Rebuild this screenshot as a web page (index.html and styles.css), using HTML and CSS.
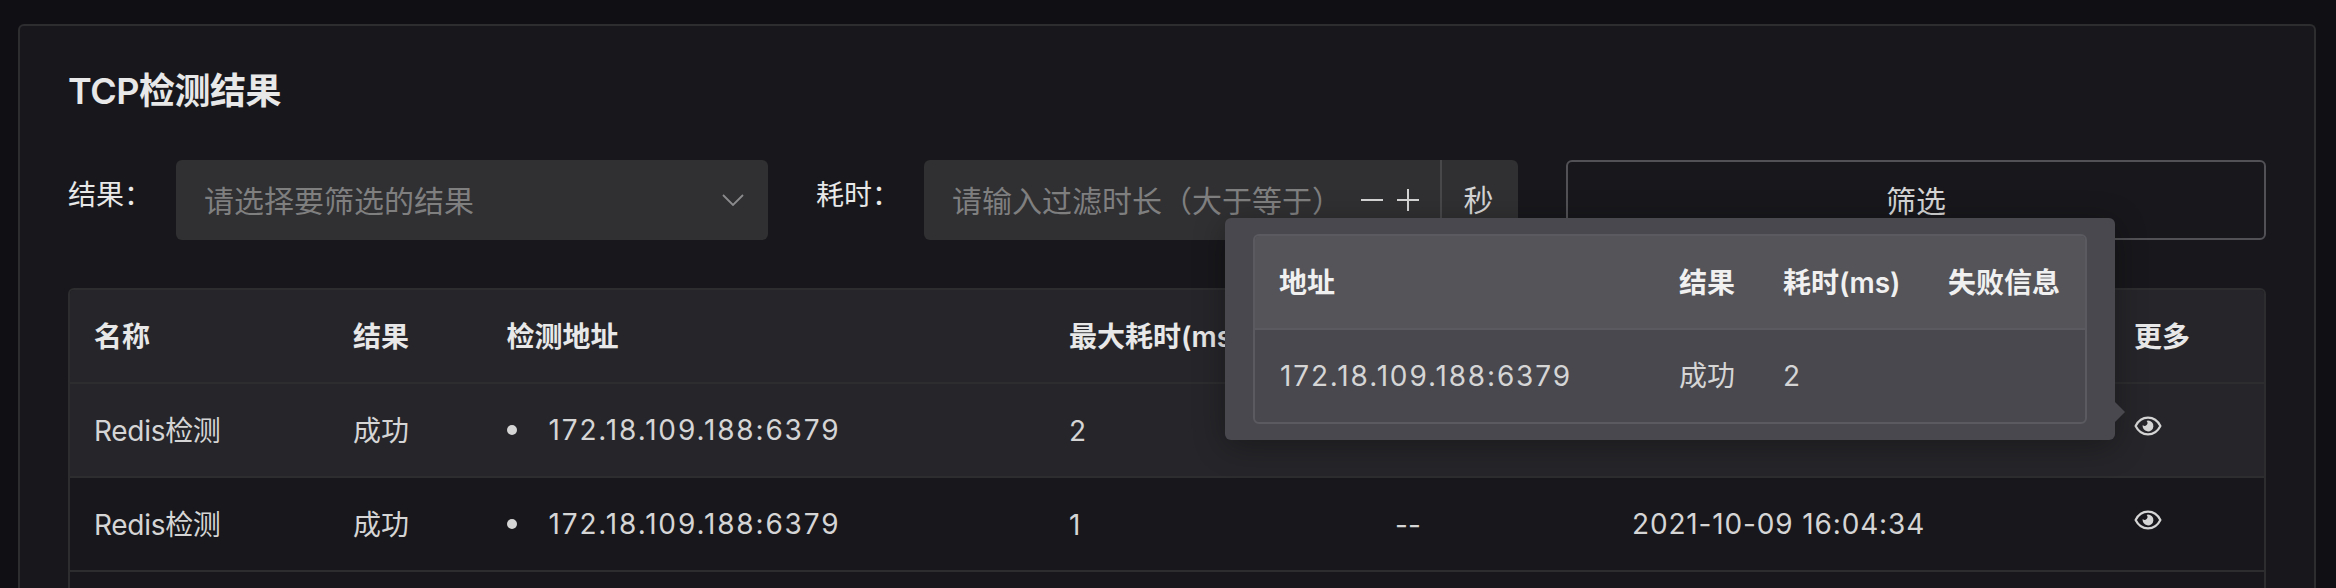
FILE: index.html
```html
<!DOCTYPE html>
<html lang="zh-CN">
<head>
<meta charset="utf-8">
<title>TCP检测结果</title>
<link rel="stylesheet" href="styles.css">
</head>
<body>
<svg class="sprite" aria-hidden="true">
  <symbol id="eye" viewBox="0 0 28 20">
    <path d="M1.6 10C4.4 4.4 9 1.6 14 1.6S23.600 4.400 26.400 10C23.600 15.600 19 18.400 14 18.400S4.400 15.600 1.600 10Z" fill="none" stroke="currentColor" stroke-width="2.200" stroke-linejoin="round"/>
    <path d="M14 4.600A5.400 5.400 0 1 1 8.700 8.900A2.600 2.600 0 0 0 12.600 5A5.400 5.400 0 0 1 14 4.600Z" fill="currentColor"/>
  </symbol>
</svg>
<main class="card">
  <h1 class="title">TCP检测结果</h1>
  <form class="filters">
    <div class="field">
      <label class="label">结果：</label>
      <div class="control select">
        <span class="placeholder">请选择要筛选的结果</span>
        <svg class="chevron" viewBox="0 0 22 12"><path d="M1 1L11 11L21 1" fill="none" stroke="currentColor" stroke-width="1.800"/></svg>
      </div>
    </div>
    <div class="field">
      <label class="label">耗时：</label>
      <div class="control number">
        <span class="placeholder">请输入过滤时长（大于等于）</span>
        <svg class="step" viewBox="0 0 24 24"><path d="M1 12H23" stroke="currentColor" stroke-width="2"/></svg>
        <svg class="step" viewBox="0 0 24 24"><path d="M1 12H23M12 1V23" stroke="currentColor" stroke-width="2"/></svg>
        <span class="unit">秒</span>
      </div>
    </div>
    <button class="button" type="button">筛选</button>
  </form>
  <section class="table">
    <div class="row head"><span>名称</span><span>结果</span><span>检测地址</span><span>最大耗时(ms)</span><span>失败信息</span><span>检测时间</span><span>更多</span></div>
    <div class="row hover"><span class="name">Redis检测</span><span>成功</span><span class="address">172.18.109.188:6379</span><span>2</span><span>--</span><span class="time">2021-10-09 16:09:34</span><span class="more"><svg class="eye"><use href="#eye"/></svg>
      <div class="popover">
        <div class="detail">
          <div class="detail-row detail-head"><span>地址</span><span>结果</span><span>耗时(ms)</span><span>失败信息</span></div>
          <div class="detail-row"><span class="ip">172.18.109.188:6379</span><span>成功</span><span>2</span><span></span></div>
        </div>
      </div></span></div>
    <div class="row"><span class="name">Redis检测</span><span>成功</span><span class="address">172.18.109.188:6379</span><span>1</span><span>--</span><span class="time">2021-10-09 16:04:34</span><span class="more"><svg class="eye"><use href="#eye"/></svg></span></div>
  </section>
</main>
</body>
</html>
```
FILE: styles.css
```css
* { box-sizing: border-box; }
body {
  margin: 0;
  height: 588px;
  overflow: hidden;
  padding: 24px 20px 0 18px;
  background: #101014;
  color: #d5d5d6;
  font: 28px/44px Inter, "Noto Sans CJK SC", sans-serif;
}
.sprite { position: absolute; width: 0; height: 0; }
.card {
  display: flex;
  flex-direction: column;
  height: 564px;
  padding: 36px 48px 0;
  border: 2px solid #2d2d30;
  border-bottom: 0;
  border-radius: 6px 6px 0 0;
  background: #18181c;
}
.title { margin: 0 0 40px; font-size: 36px; line-height: 58px; font-weight: 600; letter-spacing: -0.5px; color: #e8e8e9; }
.filters { display: flex; gap: 48px; height: 80px; margin-bottom: 48px; }
.field { display: flex; }
.label { width: 108px; padding-top: 13px; color: #e8e8e9; white-space: nowrap; }
.control { display: flex; align-items: center; height: 80px; border-radius: 6px; background: #303032; font-size: 30px; padding-left: 28px; }
.select { width: 592px; justify-content: space-between; padding-right: 24px; }
.placeholder { padding-top: 2px; color: #7f7f80; white-space: nowrap; }
.chevron { width: 22px; height: 12px; color: #8b8b8d; }
.number { width: 594px; }
.number .placeholder { width: 408px; }
.step { width: 24px; height: 24px; margin-right: 12px; flex: none; color: #d5d5d6; }
.unit { margin-left: 8px; flex: 1; height: 80px; padding: 1px 3px 0 0; line-height: 78px; border-left: 2px solid #48484b; text-align: center; }
.button { flex: 1; height: 80px; padding: 1px 0 0; border: 2px solid #525256; border-radius: 6px; background: transparent; color: #d5d5d6; font: inherit; font-size: 30px; }
.table { flex: 1; border: 2px solid #2d2d30; border-bottom: 0; border-radius: 6px 6px 0 0; }
.row { display: grid; grid-template-columns: 259px 153.5px 562.5px 326px 237px 502px 1fr; height: 94px; padding: 25px 24px 0; border-bottom: 2px solid #2d2d30; white-space: nowrap; }
.head { background: #26262a; color: #e8e8e9; font-weight: 600; border-radius: 4px 4px 0 0; }
.hover { background: #26262a; }
.name { letter-spacing: -0.3px; }
.address, .ip { letter-spacing: 1.85px; }
.ip { padding-left: 1px; }
.time { margin-top: -1px; letter-spacing: 0.85px; }
.address { display: flex; align-items: center; height: 44px; margin-top: -1px; }
.address::before { content: ""; width: 10px; height: 10px; margin-right: 32px; border-radius: 50%; background: currentColor; }
.more { position: relative; }
.eye { display: block; width: 28px; height: 20px; margin-top: 7px; color: #d5d5d6; }
.popover {
  position: absolute;
  z-index: 2;
  top: -191px;
  right: 125px;
  width: 890px;
  height: 222px;
  padding: 16px 28px;
  border-radius: 6px;
  background: #48484e;
  box-shadow: 0 6px 32px rgba(0, 0, 0, .32);
}
.popover::after { content: ""; position: absolute; left: 100%; bottom: 18px; border: 10px solid transparent; border-left-color: #48484e; border-right: 0; }
.detail { border: 2px solid #5a5a60; border-radius: 6px; }
.detail-row { display: grid; grid-template-columns: 400px 104px 165px 1fr; height: 92px; padding: 24px 24px 0; }
.detail-head { height: 94px; padding-top: 25px; background: #545459; color: #f0f0f0; font-weight: 600; border-bottom: 2px solid #5a5a60; border-radius: 4px 4px 0 0; }
```
